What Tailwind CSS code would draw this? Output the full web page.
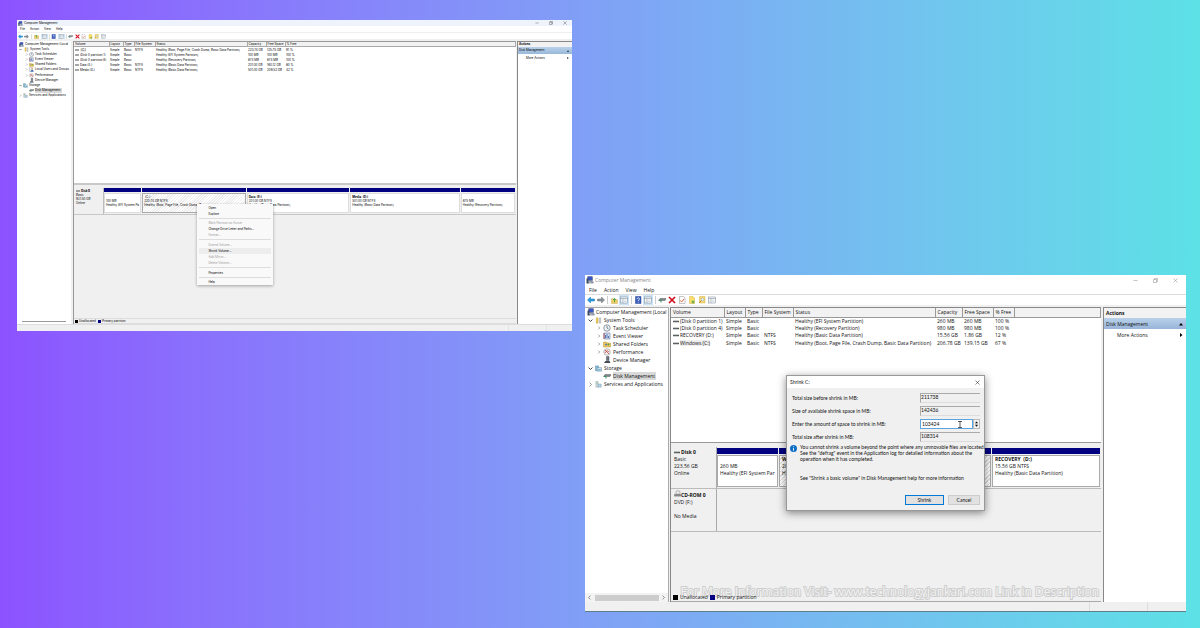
<!DOCTYPE html>
<html lang="en">
<head>
<meta charset="utf-8">
<title>Computer Management</title>
<script src="https://cdn.jsdelivr.net/npm/@tailwindcss/browser@4"></script>
</head>
<body class="min-h-screen bg-linear-to-r from-[#8c52ff] to-[#5ce1e6] font-['Open_Sans','Noto_Sans',sans-serif] text-[#111]">

<!-- Shared icons -->
<svg class="hidden" aria-hidden="true">
  <symbol id="pc" viewBox="0 0 16 16"><rect x="3" y="1" width="10" height="8" rx="1" fill="#3a55c4" stroke="#56607a"/><path d="M4 14l3-4h6l2 4z" fill="#c9ced8" stroke="#555b6b"/><path d="M1 5h4v10H1z" fill="#3c4963"/><path d="M10 8l4 4-2 3-4-4z" fill="#8d99b0"/></symbol>
  <symbol id="back" viewBox="0 0 16 16"><path d="M1 8l6-6v4h8v4H7v4z" fill="#2a9be0" stroke="#1672b4"/></symbol>
  <symbol id="fwd" viewBox="0 0 16 16"><path d="M15 8L9 2v4H1v4h8v4z" fill="#8b9298" stroke="#666d73"/></symbol>
  <symbol id="up" viewBox="0 0 16 16"><path d="M1 4h5l1 2h8v9H1z" fill="#efcf6d" stroke="#c3a145"/><path d="M8 12V5M5 7l3-4 3 4" fill="none" stroke="#3a9c3a" stroke-width="2"/></symbol>
  <symbol id="panel" viewBox="0 0 16 16"><rect x="1" y="2" width="14" height="12" fill="#fff" stroke="#71808f"/><path d="M1 5h14M6 5v9" stroke="#71808f"/><path d="M8 8h5M8 11h5M3 8h2M3 11h2" stroke="#9fb4c8"/></symbol>
  <symbol id="help" viewBox="0 0 16 16"><path d="M3 1h11v14H3z" fill="#3a5fbe" stroke="#23408c"/><path d="M6 6c0-3 5-3 5 0 0 2-2.500 2-2.500 4M8.500 11.500v1.500" fill="none" stroke="#fff" stroke-width="1.500"/></symbol>
  <symbol id="drive" viewBox="0 0 16 16"><path d="M4 5h12l-2 4H1z" fill="#7c8588" stroke="#5a6265"/><path d="M2 9h4v4" fill="none" stroke="#3b8f62" stroke-width="2"/></symbol>
  <symbol id="x" viewBox="0 0 16 16"><path d="M2 2l12 12M14 2L2 14" stroke="#cf1420" stroke-width="3.500"/></symbol>
  <symbol id="check" viewBox="0 0 16 16"><path d="M3 1h8l3 3v11H3z" fill="#fff" stroke="#888"/><path d="M5 9l2 3 5-6" fill="none" stroke="#e0663a" stroke-width="2"/></symbol>
  <symbol id="note" viewBox="0 0 16 16"><path d="M3 1h7l3 3v11H3z" fill="#fbe06a" stroke="#d0b146"/><path d="M9 9h2v2h2v2h-2v2H9v-2H7v-2h2z" fill="#4ba046"/></symbol>
  <symbol id="find" viewBox="0 0 16 16"><path d="M3 1h11v13H3z" fill="#fbdc70" stroke="#d0b146"/><circle cx="9" cy="7" r="3" fill="#eaf4fb" stroke="#7f98ab"/><path d="M7 9l-5 5" stroke="#b78b34" stroke-width="2"/></symbol>
  <symbol id="tools" viewBox="0 0 16 16"><path d="M3 2h4v12H3z" fill="#f0c84b" stroke="#b99a3e"/><path d="M10 2h3v12h-3z" fill="#d5d8dc" stroke="#8b9097"/></symbol>
  <symbol id="clock" viewBox="0 0 16 16"><circle cx="8" cy="8" r="6.500" fill="#eef3f7" stroke="#6f7a85" stroke-width="1.500"/><path d="M8 4v4l3 2" fill="none" stroke="#3c4a5a" stroke-width="1.300"/></symbol>
  <symbol id="event" viewBox="0 0 16 16"><path d="M2 2h12v12H2z" fill="#d7e2f2" stroke="#4c5f8c"/><path d="M5 12V6M8 12V4M11 12V8" stroke="#3150a0" stroke-width="1.500"/><path d="M2 2v12" stroke="#a33" stroke-width="1.500"/></symbol>
  <symbol id="share" viewBox="0 0 16 16"><path d="M1 4h6l1 2h7v8H1z" fill="#f1c95b" stroke="#bb9435"/><circle cx="6" cy="9" r="2" fill="#4a78b8"/><circle cx="11" cy="9" r="2" fill="#5d9a52"/></symbol>
  <symbol id="users" viewBox="0 0 16 16"><path d="M1 2h10v12H1z" fill="#e6e9ee" stroke="#7d8796"/><circle cx="10" cy="6" r="2.500" fill="#d6a071"/><path d="M5 15c0-7 10-7 10 0z" fill="#4471b5"/></symbol>
  <symbol id="perf" viewBox="0 0 16 16"><circle cx="8" cy="8" r="6.500" fill="#f5f5f5" stroke="#7a7a7a"/><path d="M4 4l8 8M4 10l4-5 4 3" fill="none" stroke="#c73636" stroke-width="1.500"/></symbol>
  <symbol id="device" viewBox="0 0 16 16"><path d="M7 1h5v8H7z" fill="#6d7580" stroke="#4c535c"/><path d="M2 14l3-4h8l2 4z" fill="#434b55"/></symbol>
  <symbol id="storage" viewBox="0 0 16 16"><path d="M1 2h7v11H1z" fill="#8fc1dc" stroke="#47788f"/><path d="M5 6h10v8H5z" fill="#d4e8f2" stroke="#47788f"/><path d="M7 11h6" stroke="#3290b7" stroke-width="2"/></symbol>
  <symbol id="services" viewBox="0 0 16 16"><path d="M2 1h5v13H2z" fill="#dfe6ec" stroke="#7f93a3"/><path d="M7 7h7v7H7z" fill="#b9d3e5" stroke="#6590ad"/><path d="M3 4h3M3 6h3" stroke="#6aa84f"/></symbol>
  <symbol id="vol" viewBox="0 0 16 8"><path d="M0 2h16v4H0z" fill="#4c5254"/><path d="M1 3h12" stroke="#999"/></symbol>
  <symbol id="cd" viewBox="0 0 16 16"><circle cx="9" cy="6" r="5" fill="#ddd" stroke="#888"/><circle cx="9" cy="6" r="1.500" fill="#fff"/><path d="M1 10h14v4H1z" fill="#8b8f92" stroke="#666"/></symbol>
  <symbol id="open" viewBox="0 0 8 8"><path d="M1 2.500l3 3 3-3" fill="none" stroke="#333" stroke-width="1.500"/></symbol>
  <symbol id="shut" viewBox="0 0 8 8"><path d="M2.500 1l3 3-3 3" fill="none" stroke="#777" stroke-width="1.300"/></symbol>
  <symbol id="min" viewBox="0 0 10 10"><path d="M1 5h8" stroke="currentColor"/></symbol>
  <symbol id="max" viewBox="0 0 10 10"><path d="M1 3h6v6H1zM3 3V1h6v6H7" fill="none" stroke="currentColor"/></symbol>
  <symbol id="close" viewBox="0 0 10 10"><path d="M1 1l8 8M9 1L1 9" stroke="currentColor"/></symbol>
</svg>

<main class="grid min-h-screen grid-cols-[555fr_601fr] gap-x-[13px] pt-5 pr-[14px] pb-4 pl-[17px]">

  <!-- First window -->
  <section class="relative flex aspect-[555/311] flex-col self-start overflow-hidden bg-[#f0f0f0] text-[3px] leading-[5px] whitespace-nowrap text-black font-['Inter','Open_Sans',sans-serif]">
    <header class="flex h-[6px] items-center bg-[#eff3fb] pl-px">
      <svg class="size-[5px]"><use href="#pc"/></svg>
      <h1 class="ml-px flex-1">Computer Management</h1>
      <div class="flex gap-[10px] pr-[5px] text-[#444]">
        <button class="block" aria-label="Minimize"><svg class="size-[4px]"><use href="#min"/></svg></button>
        <button class="block" aria-label="Restore"><svg class="size-[4px]"><use href="#max"/></svg></button>
        <button class="block" aria-label="Close"><svg class="size-[4px]"><use href="#close"/></svg></button>
      </div>
    </header>
    <nav class="flex h-[7px] items-center gap-[5px] border-b border-[#eee] bg-white pl-[3px]">
      <button>File</button><button>Action</button><button>View</button><button>Help</button>
    </nav>
    <div class="flex h-[6px] items-center bg-white pl-px">
      <div class="flex gap-px"><button aria-label="Back"><svg class="size-[5px]"><use href="#back"/></svg></button><button aria-label="Forward"><svg class="size-[5px]"><use href="#fwd"/></svg></button></div>
      <i class="mx-[2px] h-[5px] w-px bg-[#ddd]"></i>
      <button aria-label="Up"><svg class="size-[5px]"><use href="#up"/></svg></button>
      <button class="ml-[2px] bg-[#cce4f7] px-px" aria-label="Show tree"><svg class="size-[5px]"><use href="#panel"/></svg></button>
      <i class="mx-px h-[5px] w-px bg-[#ddd]"></i>
      <button aria-label="Help"><svg class="size-[5px]"><use href="#help"/></svg></button>
      <button class="ml-[2px] bg-[#cce4f7] px-px" aria-label="Show actions"><svg class="size-[5px]"><use href="#panel"/></svg></button>
      <i class="mx-px h-[5px] w-px bg-[#ddd]"></i>
      <div class="flex w-[38px] justify-between">
        <button aria-label="Disk"><svg class="size-[5px]"><use href="#drive"/></svg></button>
        <button aria-label="Delete"><svg class="size-[5px]"><use href="#x"/></svg></button>
        <button aria-label="Check"><svg class="size-[5px]"><use href="#check"/></svg></button>
        <button aria-label="New"><svg class="size-[5px]"><use href="#note"/></svg></button>
        <button aria-label="Find"><svg class="size-[5px]"><use href="#find"/></svg></button>
        <button aria-label="View"><svg class="size-[5px]"><use href="#panel"/></svg></button>
      </div>
    </div>

    <div class="mt-[2px] flex min-h-0 flex-1">
      <aside class="flex w-[54px] shrink-0 flex-col justify-between overflow-hidden bg-white">
        <ul class="flex h-[57px] flex-col justify-between pt-px">
          <li class="flex items-center gap-px pl-[2px]"><svg class="size-[5px] shrink-0"><use href="#pc"/></svg>Computer Management (Local</li>
          <li class="flex items-center gap-px pl-[2px]"><svg class="size-[3px]"><use href="#open"/></svg><svg class="ml-px size-[5px]"><use href="#tools"/></svg>System Tools</li>
          <li class="flex items-center gap-px pl-[8px]"><svg class="size-[3px]"><use href="#shut"/></svg><svg class="size-[5px]"><use href="#clock"/></svg>Task Scheduler</li>
          <li class="flex items-center gap-px pl-[8px]"><svg class="size-[3px]"><use href="#shut"/></svg><svg class="size-[5px]"><use href="#event"/></svg>Event Viewer</li>
          <li class="flex items-center gap-px pl-[8px]"><svg class="size-[3px]"><use href="#shut"/></svg><svg class="size-[5px]"><use href="#share"/></svg>Shared Folders</li>
          <li class="flex items-center gap-px pl-[8px]"><svg class="size-[3px] shrink-0"><use href="#shut"/></svg><svg class="size-[5px] shrink-0"><use href="#users"/></svg>Local Users and Groups</li>
          <li class="flex items-center gap-px pl-[8px]"><svg class="size-[3px]"><use href="#shut"/></svg><svg class="size-[5px]"><use href="#perf"/></svg>Performance</li>
          <li class="flex items-center gap-px pl-[12px]"><svg class="size-[5px]"><use href="#device"/></svg>Device Manager</li>
          <li class="flex items-center gap-px pl-[2px]"><svg class="size-[3px]"><use href="#open"/></svg><svg class="size-[5px]"><use href="#storage"/></svg>Storage</li>
          <li class="flex items-center gap-px pl-[12px]"><svg class="size-[5px]"><use href="#drive"/></svg><span class="bg-[#d9d9d9] pr-px">Disk Management</span></li>
          <li class="flex items-center gap-px pl-[2px]"><svg class="size-[3px] shrink-0"><use href="#shut"/></svg><svg class="size-[5px] shrink-0"><use href="#services"/></svg>Services and Applications</li>
        </ul>
        <div class="mx-[5px] mb-[2px] h-px bg-[#999]"></div>
      </aside>

      <div class="ml-[2px] flex min-w-0 flex-1 flex-col border-t border-l border-[#999]">
        <div class="h-[143px] border-b-2 border-[#c8c8c8] bg-white">
          <table class="h-[31px] w-full table-fixed border-collapse text-left">
            <colgroup><col class="w-[35px]"><col class="w-[14px]"><col class="w-[11px]"><col class="w-[21px]"><col class="w-[92px]"><col class="w-[19px]"><col class="w-[19px]"><col></colgroup>
            <thead><tr class="border-b border-[#aaa] bg-[#f2f2f2] leading-[4px] *:border-r *:border-[#aaa] *:pl-px *:font-normal"><th>Volume</th><th>Layout</th><th>Type</th><th>File System</th><th>Status</th><th>Capacity</th><th>Free Space</th><th>% Free</th></tr></thead>
            <tbody class="leading-[4px] [&_td]:pl-px">
              <tr><td><svg class="mr-px inline h-[2px] w-[4px] align-baseline"><use href="#vol"/></svg><span class="bg-[#eee]"> (C:)</span></td><td>Simple</td><td>Basic</td><td>NTFS</td><td>Healthy (Boot, Page File, Crash Dump, Basic Data Partition)</td><td>220.74 GB</td><td>125.75 GB</td><td>91 %</td></tr>
              <tr><td><svg class="mr-px inline h-[2px] w-[4px] align-baseline"><use href="#vol"/></svg>(Disk 0 partition 1)</td><td>Simple</td><td>Basic</td><td></td><td>Healthy (EFI System Partition)</td><td>100 MB</td><td>100 MB</td><td>100 %</td></tr>
              <tr><td><svg class="mr-px inline h-[2px] w-[4px] align-baseline"><use href="#vol"/></svg>(Disk 0 partition 6)</td><td>Simple</td><td>Basic</td><td></td><td>Healthy (Recovery Partition)</td><td>674 MB</td><td>674 MB</td><td>100 %</td></tr>
              <tr><td><svg class="mr-px inline h-[2px] w-[4px] align-baseline"><use href="#vol"/></svg>Data (E:)</td><td>Simple</td><td>Basic</td><td>NTFS</td><td>Healthy (Basic Data Partition)</td><td>201.00 GB</td><td>160.12 GB</td><td>80 %</td></tr>
              <tr><td><svg class="mr-px inline h-[2px] w-[4px] align-baseline"><use href="#vol"/></svg>Media (D:)</td><td>Simple</td><td>Basic</td><td>NTFS</td><td>Healthy (Basic Data Partition)</td><td>501.00 GB</td><td>209.52 GB</td><td>42 %</td></tr>
            </tbody>
          </table>
        </div>
        <div class="mt-[3px] flex h-[27px] border-b border-[#c8c8c8]">
          <div class="w-[30px] border-r border-[#bbb] pt-px pl-[2px] leading-[4px]"><b class="block"><svg class="mr-px inline h-[2px] w-[4px] align-baseline"><use href="#vol"/></svg>Disk 0</b>Basic<br>931.50 GB<br>Online</div>
          <div class="grid min-w-0 flex-1 grid-cols-[37fr_103fr_102fr_109fr_54fr] gap-px pr-px pb-px leading-[4px]">
            <div class="flex flex-col overflow-hidden border-t-4 border-[#000080]"><div class="mt-px flex-1 border border-[#ddd] bg-white pt-[5px] pl-px">100 MB<br>Healthy (EFI System Pa</div></div>
            <div class="flex flex-col overflow-hidden border-t-4 border-[#000080]"><div class="mt-px flex-1 border border-[#aaa] bg-[repeating-linear-gradient(135deg,#fff_0_1px,#ededed_1px_2px)] pt-px pl-px">&nbsp;(C:)<br>220.74 GB NTFS<br>Healthy (Boot, Page File, Crash Dump, Basic</div></div>
            <div class="flex flex-col overflow-hidden border-t-4 border-[#000080]"><div class="mt-px flex-1 border border-[#ddd] bg-white pt-px pl-px"><b>Data&nbsp; (E:)</b><br>201.00 GB NTFS<br>Healthy (Basic Data Partition)</div></div>
            <div class="flex flex-col overflow-hidden border-t-4 border-[#000080]"><div class="mt-px flex-1 border border-[#ddd] bg-white pt-px pl-px"><b>Media&nbsp; (D:)</b><br>501.00 GB NTFS<br>Healthy (Basic Data Partition)</div></div>
            <div class="flex flex-col overflow-hidden border-t-4 border-[#000080]"><div class="mt-px flex-1 border border-[#ddd] bg-white pt-[5px] pl-px">675 MB<br>Healthy (Recovery Partition)</div></div>
          </div>
        </div>
        <div class="mt-auto flex h-[6px] items-center border-y border-[#ddd] pl-px"><i class="mr-px size-[3px] bg-black"></i>Unallocated<i class="mr-px ml-[2px] size-[3px] bg-[#000080]"></i>Primary partition</div>
      </div>

      <aside class="ml-px w-[55px] border-t border-l border-[#888] bg-white">
        <h2 class="bg-[#f2f2f2] pl-px font-bold">Actions</h2>
        <div class="flex h-[7px] items-center justify-between bg-linear-to-b from-[#b9d1ea] to-[#98b8d9] pr-[3px] pl-px"><span>Disk Management</span><svg class="size-[2px]" viewBox="0 0 8 8"><path d="M0 7l4-6 4 6z"/></svg></div>
        <button class="flex h-[8px] w-full items-center justify-between pr-[3px] pl-[8px]">More Actions<svg class="size-[2px]" viewBox="0 0 8 8"><path d="M1 0l6 4-6 4z"/></svg></button>
      </aside>
    </div>
    <footer class="flex h-[7px] justify-end border-t border-[#ddd]"><i class="w-[38px] border-l border-[#e4e4e4]"></i><i class="w-[26px] border-l border-[#e4e4e4]"></i></footer>

    <!-- Context menu -->
    <div role="menu" class="absolute top-[184px] left-[32.5%] flex w-[76px] flex-col bg-[#f9f9f9] px-[2px] pt-px shadow-[0_1px_3px_#0005] *:text-left *:[button]:h-[6px] *:[button]:pl-[9px] *:[hr]:my-px *:[hr]:border-[#ddd]">
      <button>Open</button><button>Explore</button><hr>
      <button class="text-[#999]">Mark Partition as Active</button><button>Change Drive Letter and Paths...</button><button class="text-[#999]">Format...</button>
      <div class="mb-px pt-px pb-px"><hr class="border-[#ddd]"></div>
      <button class="text-[#999]">Extend Volume...</button><button class="bg-[#ededed]">Shrink Volume...</button><button class="text-[#999]">Add Mirror...</button><button class="text-[#999]">Delete Volume...</button>
      <div class="mb-px pt-px pb-px"><hr class="border-[#ddd]"></div>
      <button>Properties</button><hr><button>Help</button>
    </div>
  </section>

  <!-- Second window -->
  <section class="relative flex aspect-[601/337] flex-col self-end overflow-hidden border-b border-[#5d7f8c] bg-[#f0f0f0] text-[5px] leading-[8px] whitespace-nowrap">
    <header class="flex h-[10px] items-center bg-white pl-px text-[#888]">
      <svg class="size-[8px]"><use href="#pc"/></svg>
      <h1 class="ml-px flex-1 text-[5px]">Computer Management</h1>
      <div class="flex gap-[15px] pr-[8px]">
        <button class="block" aria-label="Minimize"><svg class="size-[5px]"><use href="#min"/></svg></button>
        <button class="block" aria-label="Restore"><svg class="size-[5px]"><use href="#max"/></svg></button>
        <button class="block" aria-label="Close"><svg class="size-[5px]"><use href="#close"/></svg></button>
      </div>
    </header>
    <nav class="flex h-[10px] items-center gap-[7px] border-b border-[#ddd] bg-white pl-[4px]">
      <button>File</button><button>Action</button><button>View</button><button>Help</button>
    </nav>
    <div class="flex h-[10px] items-center bg-white pl-px *:[button]:flex *:[button]:h-[10px] *:[button]:w-[10px] *:[button]:items-center *:[button]:justify-center">
      <button aria-label="Back"><svg class="size-[8px]"><use href="#back"/></svg></button>
      <button aria-label="Forward"><svg class="size-[8px]"><use href="#fwd"/></svg></button>
      <i class="mx-px h-[8px] w-px bg-[#ccc]"></i>
      <button aria-label="Up"><svg class="size-[7px]"><use href="#up"/></svg></button>
      <button class="bg-[#cce4f7]" aria-label="Show tree"><svg class="size-[8px]"><use href="#panel"/></svg></button>
      <i class="mr-px ml-[2px] h-[8px] w-px bg-[#ccc]"></i>
      <button aria-label="Help"><svg class="size-[8px]"><use href="#help"/></svg></button>
      <button class="bg-[#cce4f7]" aria-label="Show actions"><svg class="size-[8px]"><use href="#panel"/></svg></button>
      <i class="mr-px ml-[2px] h-[8px] w-px bg-[#ccc]"></i>
      <button aria-label="Disk"><svg class="size-[8px]"><use href="#drive"/></svg></button>
      <button aria-label="Delete"><svg class="size-[8px]"><use href="#x"/></svg></button>
      <button aria-label="Check"><svg class="size-[8px]"><use href="#check"/></svg></button>
      <button aria-label="New"><svg class="size-[8px]"><use href="#note"/></svg></button>
      <button aria-label="Find"><svg class="size-[8px]"><use href="#find"/></svg></button>
      <button aria-label="View"><svg class="size-[8px]"><use href="#panel"/></svg></button>
    </div>

    <div class="mt-[2px] flex min-h-0 flex-1">
      <aside class="flex w-[84px] shrink-0 flex-col justify-between overflow-hidden border-t border-r border-[#aaa] bg-white">
        <ul>
          <li class="flex items-center gap-px pl-[2px]"><svg class="size-[8px] shrink-0"><use href="#pc"/></svg>Computer Management (Local</li>
          <li class="flex items-center gap-[2px] pl-[3px]"><svg class="size-[5px]"><use href="#open"/></svg><svg class="size-[7px]"><use href="#tools"/></svg>System Tools</li>
          <li class="flex items-center gap-[2px] pl-[12px]"><svg class="size-[4px]"><use href="#shut"/></svg><svg class="size-[8px]"><use href="#clock"/></svg>Task Scheduler</li>
          <li class="flex items-center gap-[2px] pl-[12px]"><svg class="size-[4px]"><use href="#shut"/></svg><svg class="size-[8px]"><use href="#event"/></svg>Event Viewer</li>
          <li class="flex items-center gap-[2px] pl-[12px]"><svg class="size-[4px]"><use href="#shut"/></svg><svg class="size-[8px]"><use href="#share"/></svg>Shared Folders</li>
          <li class="flex items-center gap-[2px] pl-[12px]"><svg class="size-[4px]"><use href="#shut"/></svg><svg class="size-[8px]"><use href="#perf"/></svg>Performance</li>
          <li class="flex items-center gap-[2px] pl-[18px]"><svg class="size-[8px]"><use href="#device"/></svg>Device Manager</li>
          <li class="flex items-center gap-[2px] pl-[3px]"><svg class="size-[5px]"><use href="#open"/></svg><svg class="size-[7px]"><use href="#storage"/></svg>Storage</li>
          <li class="flex items-center gap-[2px] pl-[18px]"><svg class="size-[8px]"><use href="#drive"/></svg><span class="bg-[#d9d9d9] pr-px">Disk Management</span></li>
          <li class="flex items-center gap-[2px] pl-[3px]"><svg class="size-[5px] shrink-0"><use href="#shut"/></svg><svg class="size-[7px] shrink-0"><use href="#services"/></svg>Services and Applications</li>
        </ul>
        <div class="flex h-[9px] items-center justify-between bg-[#f3f3f3] px-[2px]"><svg class="size-[5px] rotate-180"><use href="#shut"/></svg><i class="h-[6px] w-[64px] bg-[#cdcdcd]"></i><svg class="size-[5px]"><use href="#shut"/></svg></div>
      </aside>

      <div class="ml-px flex min-w-0 flex-1 flex-col border-t border-l border-[#888]">
        <div class="h-[135px] border-b border-[#999] bg-white">
          <table class="h-[39px] w-full table-fixed border-collapse text-left">
            <colgroup><col class="w-[53px]"><col class="w-[21px]"><col class="w-[17px]"><col class="w-[31px]"><col class="w-[142px]"><col class="w-[27px]"><col class="w-[31px]"><col class="w-[21px]"><col></colgroup>
            <thead><tr class="h-[9px] border-b border-[#999] bg-[#f2f2f2] leading-[7px] *:border-r *:border-[#999] *:pl-[2px] *:font-normal"><th>Volume</th><th>Layout</th><th>Type</th><th>File System</th><th>Status</th><th>Capacity</th><th>Free Space</th><th>% Free</th><th></th></tr></thead>
            <tbody class="leading-[7px] [&_td]:pl-[2px]">
              <tr><td><svg class="mr-px inline h-[3px] w-[6px] align-baseline"><use href="#vol"/></svg>(Disk 0 partition 1)</td><td>Simple</td><td>Basic</td><td></td><td>Healthy (EFI System Partition)</td><td>260 MB</td><td>260 MB</td><td>100 %</td></tr>
              <tr><td><svg class="mr-px inline h-[3px] w-[6px] align-baseline"><use href="#vol"/></svg>(Disk 0 partition 4)</td><td>Simple</td><td>Basic</td><td></td><td>Healthy (Recovery Partition)</td><td>980 MB</td><td>980 MB</td><td>100 %</td></tr>
              <tr><td><svg class="mr-px inline h-[3px] w-[6px] align-baseline"><use href="#vol"/></svg>RECOVERY (D:)</td><td>Simple</td><td>Basic</td><td>NTFS</td><td>Healthy (Basic Data Partition)</td><td>15.56 GB</td><td>1.86 GB</td><td>12 %</td></tr>
              <tr><td><svg class="mr-px inline h-[3px] w-[6px] align-baseline"><use href="#vol"/></svg><span class="bg-[#eee]">Windows (C:)</span></td><td>Simple</td><td>Basic</td><td>NTFS</td><td>Healthy (Boot, Page File, Crash Dump, Basic Data Partition)</td><td>206.78 GB</td><td>139.15 GB</td><td>67 %</td></tr>
            </tbody>
          </table>
        </div>
        <div class="mt-[4px] flex h-[42px] border-b border-[#bbb]">
          <div class="w-[46px] border-r border-[#aaa] pt-[2px] pl-[3px] leading-[7px]"><b class="block"><svg class="mr-px inline h-[3px] w-[6px] align-baseline"><use href="#vol"/></svg>Disk 0</b>Basic<br>223.56 GB<br>Online</div>
          <div class="grid min-w-0 flex-1 grid-cols-[61fr_212fr_108fr] gap-px pt-px pr-px pb-px leading-[7px]">
            <div class="flex flex-col overflow-hidden border-t-[6px] border-[#000080]"><div class="mt-px flex-1 border border-[#aaa] bg-white pt-[7px] pl-[2px]">260 MB<br>Healthy (EFI System Par</div></div>
            <div class="flex flex-col overflow-hidden border-t-[6px] border-[#000080]"><div class="mt-px flex-1 overflow-hidden border border-[#aaa] bg-[repeating-linear-gradient(135deg,#fff_0_2px,#ddd_2px_3px)] pl-[2px]"><b>W</b><br>20<br>H</div></div>
            <div class="flex flex-col overflow-hidden border-t-[6px] border-[#000080]"><div class="mt-px flex-1 border border-[#aaa] bg-white pl-[2px]"><b>RECOVERY&nbsp; (D:)</b><br>15.56 GB NTFS<br>Healthy (Basic Data Partition)</div></div>
          </div>
        </div>
        <div class="flex h-[43px] border-b border-[#bbb]">
          <div class="w-[46px] border-r border-[#aaa] pt-px pl-[3px] leading-[7px]"><b class="block"><svg class="inline size-[7px] align-baseline"><use href="#cd"/></svg>CD-ROM 0</b>DVD (F:)<br><br>No Media</div>
        </div>
        <div class="relative z-10 mt-auto flex h-[9px] items-center border-b border-[#aaa] pl-[2px]"><i class="mr-[2px] size-[5px] bg-black"></i>Unallocated<i class="mr-[2px] ml-[2px] size-[5px] bg-[#000080]"></i>Primary partition</div>
      </div>

      <aside class="ml-[2px] w-[83px] border-t border-l border-[#888] bg-white">
        <h2 class="h-[10px] bg-[#f2f2f2] pl-[2px] leading-[10px] font-bold">Actions</h2>
        <div class="flex h-[11px] items-center justify-between bg-linear-to-b from-[#b9d1ea] to-[#98b4d9] pr-[3px] pl-[2px]"><span>Disk Management</span><svg class="size-[4px]" viewBox="0 0 8 8"><path d="M0 7l4-5 4 5z"/></svg></div>
        <button class="flex h-[11px] w-full items-center justify-between pr-[3px] pl-[13px]">More Actions<svg class="size-[4px]" viewBox="0 0 8 8"><path d="M2 0l5 4-5 4z"/></svg></button>
      </aside>
    </div>
    <footer class="flex h-[9px] justify-end"><i class="w-[58px] border-l border-[#ddd]"></i><i class="w-[39px] border-l border-[#ddd]"></i></footer>

    <p class="absolute right-[87px] bottom-[11px] text-[12px] leading-[16px] text-[#f2f2f2] [paint-order:stroke] [-webkit-text-stroke:2px_#cecece]">For More Information Visit- www.technologyjankari.com Link in Description</p>

    <!-- Shrink dialog -->
    <form class="absolute top-[100px] left-[201px] w-[199px] border border-[#999] bg-[#f0f0f0] shadow-[0_2px_8px_#0007] font-['Lato',sans-serif]">
      <header class="flex h-[12px] items-center justify-between bg-white pr-[4px] pl-[3px]"><h2>Shrink C:</h2><button type="button" aria-label="Close"><svg class="size-[5px]"><use href="#close"/></svg></button></header>
      <div class="grid grid-cols-[1fr_60px] items-center gap-y-[3px] pt-[5px] pr-[4px] pl-[5px]">
        <label for="before">Total size before shrink in MB:</label><input id="before" readonly value="211738" class="h-[10px] min-w-0 border-t border-l border-t-[#aaa] border-l-[#aaa] border-b border-b-[#ddd] pb-[2px]">
        <label for="avail">Size of available shrink space in MB:</label><input id="avail" readonly value="142436" class="h-[10px] min-w-0 border-t border-l border-t-[#aaa] border-l-[#aaa] border-b border-b-[#ddd] pb-[2px]">
        <label for="amount">Enter the amount of space to shrink in MB:</label>
        <div class="relative flex h-[10px]"><input id="amount" value="103424" class="w-[53px] border border-[#5aa5e0] bg-white pl-px"><button type="button" aria-label="Change amount" class="flex flex-1 flex-col items-center justify-between border border-[#bbb] py-px"><svg class="size-[3px]" viewBox="0 0 8 8"><path d="M0 6l4-5 4 5z"/></svg><svg class="size-[3px]" viewBox="0 0 8 8"><path d="M0 2l4 5 4-5z"/></svg></button>
          <svg class="absolute top-[2px] left-[38px] h-[7px] w-[4px]" viewBox="0 0 4 7"><path d="M0 .5h4M2 .5v6M0 6.500h4" stroke="#333" stroke-width=".8"/></svg></div>
        <label for="after">Total size after shrink in MB:</label><input id="after" readonly value="108314" class="h-[10px] min-w-0 border-t border-l border-t-[#aaa] border-l-[#aaa] border-b border-b-[#ddd] pb-[2px]">
      </div>
      <div class="mt-[2px] flex gap-[3px] pl-[3px] leading-[6px]">
        <svg class="mt-px size-[7px] shrink-0" viewBox="0 0 16 16"><circle cx="8" cy="8" r="8" fill="#0f6fc5"/><path d="M8 7v6M8 3v2" stroke="#fff" stroke-width="2"/></svg>
        <div><p>You cannot shrink a volume beyond the point where any unmovable files are located.<br>See the "defrag" event in the Application log for detailed information about the<br>operation when it has completed.</p><p class="mt-[13px]">See "Shrink a basic volume" in Disk Management help for more information</p></div>
      </div>
      <div class="mt-[14px] mb-[5px] flex justify-end gap-[4px] pr-[4px]"><button type="button" class="h-[10px] w-[39px] border border-[#0078d7] bg-[#e1e1e1]">Shrink</button><button type="button" class="h-[10px] w-[32px] border border-[#ccc] bg-[#e1e1e1]">Cancel</button></div>
    </form>
  </section>
</main>
</body>
</html>
